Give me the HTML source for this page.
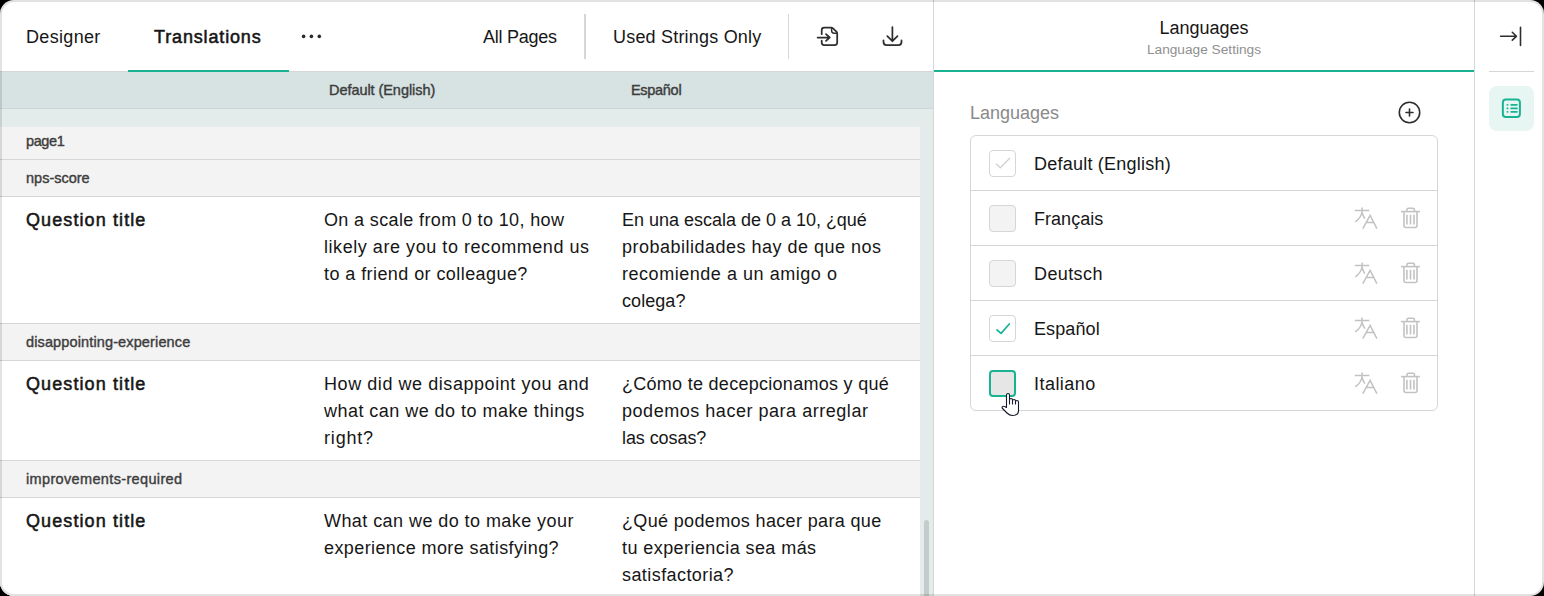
<!DOCTYPE html>
<html><head><meta charset="utf-8">
<style>
*{box-sizing:border-box;margin:0;padding:0}
html,body{width:1544px;height:596px;overflow:hidden;background:#000}
body{font-family:"Liberation Sans",sans-serif;color:#161616;position:relative}
#frame{position:absolute;left:0;top:0;width:1544px;height:596px;border-radius:14px;background:#fff;overflow:hidden}
#bord{position:absolute;left:0;top:0;width:1544px;height:596px;border-radius:14px;border:2px solid rgba(0,0,0,0.115);pointer-events:none}
.a{position:absolute;white-space:nowrap}
.bx{position:absolute}
.t18{font-size:18px;line-height:27px}
.sb{font-weight:700}
.grp{position:absolute;left:0;width:920px;background:#f3f3f3}
.ln{position:absolute;height:1px;background:#d6d6d6}
.gtxt{position:absolute;white-space:nowrap;font-size:14.5px;line-height:18px;font-weight:400;color:#3d3d3d;-webkit-text-stroke:0.4px #3d3d3d}
.qh{position:absolute;white-space:nowrap;font-size:18px;line-height:27px;font-weight:400;letter-spacing:1.1px;-webkit-text-stroke:0.55px #161616}
.qt{font-size:18px;line-height:27px;position:absolute;white-space:nowrap}
.cb{position:absolute;left:989px;width:27px;height:27px;border:1px solid #d6d6d6;border-radius:4px;background:#f3f3f3}
.ll{position:absolute;left:1034px;font-size:18px;line-height:24px;white-space:nowrap;letter-spacing:0.23px}
.ic{position:absolute;overflow:visible}
</style></head>
<body>
<div id="frame">
  <!-- top toolbar -->
  <div class="a t18" style="left:26px;top:24px;letter-spacing:0.33px">Designer</div>
  <div class="a t18" style="left:154px;top:24px;letter-spacing:0.85px;-webkit-text-stroke:0.55px #161616">Translations</div>
  <svg class="ic" style="left:0;top:0" width="1" height="1"><g fill="#2a2a2a"><circle cx="303.6" cy="36.4" r="1.8"/><circle cx="311.4" cy="36.4" r="1.8"/><circle cx="319.3" cy="36.4" r="1.8"/></g></svg>
  <div class="a t18" style="left:483px;top:24px;letter-spacing:-0.25px">All Pages</div>
  <div class="bx" style="left:584px;top:14px;width:2px;height:45px;background:#d6d6d6"></div>
  <div class="a t18" style="left:613px;top:24px;letter-spacing:0.2px">Used Strings Only</div>
  <div class="bx" style="left:788px;top:14px;width:1px;height:45px;background:#d6d6d6"></div>
  <!-- import icon -->
  <svg class="ic" style="left:812px;top:20px" width="34" height="32" viewBox="812 20 34 32" fill="none" stroke="#2e2e2e" stroke-width="1.75" stroke-linecap="round" stroke-linejoin="round">
    <path d="M821.7,34.2 V30 Q821.7,27.5 824.2,27.5 H831.3 Q832.2,27.5 833,28.3 L836.4,31.7 Q837.2,32.5 837.2,33.4 V42.5 Q837.2,45 834.7,45 H824.2 Q821.7,45 821.7,42.5 V40.7"/>
    <path d="M831.6,28.4 V30.6 Q831.6,33.2 834.2,33.2 H836.5" stroke-width="1.5"/>
    <path d="M817.6,37.5 H829.7 M826,34.2 L829.7,37.5 L826,40.9"/>
  </svg>
  <!-- download icon -->
  <svg class="ic" style="left:876px;top:20px" width="34" height="32" viewBox="876 20 34 32" fill="none" stroke="#2e2e2e" stroke-width="1.75" stroke-linecap="round" stroke-linejoin="round">
    <path d="M892.4,27 V41.2 M887.3,36.1 L892.4,41.2 L897.5,36.1"/>
    <path d="M883.5,40.4 V42 Q883.5,45 886.5,45 H898.5 Q901.5,45 901.5,42 V40.4"/>
  </svg>
  <div class="ln" style="left:0;top:71px;width:933px"></div>
  <div class="bx" style="left:128px;top:70px;width:161px;height:2px;background:#19b394"></div>

  <!-- table header -->
  <div class="bx" style="left:0;top:72px;width:933px;height:36px;background:#d7e2e2"></div>
  <div class="ln" style="left:0;top:108px;width:933px;background:#cfd6d6"></div>
  <div class="bx" style="left:0;top:109px;width:933px;height:487px;background:#e3ecea"></div>
  <div class="gtxt" style="left:329px;top:81px;letter-spacing:-0.06px">Default (English)</div>
  <div class="gtxt" style="left:631px;top:81px;letter-spacing:-0.3px">Español</div>

  <!-- rows -->
  <div class="grp" style="top:127px;height:32px"></div>
  <div class="gtxt" style="left:26px;top:132px;letter-spacing:-0.4px">page1</div>
  <div class="ln" style="left:0;top:159px;width:920px"></div>
  <div class="grp" style="top:160px;height:36px"></div>
  <div class="gtxt" style="left:26px;top:169px">nps-score</div>
  <div class="ln" style="left:0;top:196px;width:920px"></div>
  <div class="bx" style="left:0;top:197px;width:920px;height:126px;background:#fff"></div>
  <div class="qh" style="left:26px;top:207px">Question title</div>
  <div class="qt" style="left:324px;top:207px"><div style="letter-spacing:0.363px">On a scale from 0 to 10, how</div><div style="letter-spacing:0.552px">likely are you to recommend us</div><div style="letter-spacing:0.425px">to a friend or colleague?</div></div>
  <div class="qt" style="left:622px;top:207px"><div style="letter-spacing:-0.011px">En una escala de 0 a 10, ¿qué</div><div style="letter-spacing:0.493px">probabilidades hay de que nos</div><div style="letter-spacing:0.536px">recomiende a un amigo o</div><div style="letter-spacing:0.067px">colega?</div></div>
  <div class="ln" style="left:0;top:323px;width:920px"></div>
  <div class="grp" style="top:324px;height:36px"></div>
  <div class="gtxt" style="left:26px;top:333px;letter-spacing:0.13px">disappointing-experience</div>
  <div class="ln" style="left:0;top:360px;width:920px"></div>
  <div class="bx" style="left:0;top:361px;width:920px;height:99px;background:#fff"></div>
  <div class="qh" style="left:26px;top:371px">Question title</div>
  <div class="qt" style="left:324px;top:371px"><div style="letter-spacing:0.561px">How did we disappoint you and</div><div style="letter-spacing:0.464px">what can we do to make things</div><div style="letter-spacing:0.82px">right?</div></div>
  <div class="qt" style="left:622px;top:371px"><div style="letter-spacing:0.281px">¿Cómo te decepcionamos y qué</div><div style="letter-spacing:0.531px">podemos hacer para arreglar</div><div style="letter-spacing:-0.078px">las cosas?</div></div>
  <div class="ln" style="left:0;top:460px;width:920px"></div>
  <div class="grp" style="top:461px;height:36px"></div>
  <div class="gtxt" style="left:26px;top:470px;letter-spacing:0.35px">improvements-required</div>
  <div class="ln" style="left:0;top:497px;width:920px"></div>
  <div class="bx" style="left:0;top:498px;width:920px;height:98px;background:#fff"></div>
  <div class="qh" style="left:26px;top:508px">Question title</div>
  <div class="qt" style="left:324px;top:508px"><div style="letter-spacing:0.435px">What can we do to make your</div><div style="letter-spacing:0.404px">experience more satisfying?</div></div>
  <div class="qt" style="left:622px;top:508px"><div style="letter-spacing:0.346px">¿Qué podemos hacer para que</div><div style="letter-spacing:0.429px">tu experiencia sea más</div><div style="letter-spacing:0.423px">satisfactoria?</div></div>
  <!-- scrollbar -->
  <div class="bx" style="left:924px;top:520px;width:5px;height:90px;border-radius:3px;background:#c4cbca"></div>

  <!-- panel divider -->
  <div class="bx" style="left:933px;top:0;width:1px;height:596px;background:#d6d6d6"></div>

  <!-- right panel -->
  <div class="a" style="left:934px;top:17px;width:540px;text-align:center;font-size:18px;line-height:22px">Languages</div>
  <div class="a" style="left:934px;top:41px;width:540px;text-align:center;font-size:13.7px;line-height:18px;color:#909090">Language Settings</div>
  <div class="bx" style="left:934px;top:70px;width:540px;height:2px;background:#19b394"></div>
  <div class="a" style="left:970px;top:102px;font-size:18px;line-height:22px;color:#8a8a8a">Languages</div>
  <svg class="ic" style="left:1390px;top:95px" width="40" height="35" viewBox="1390 95 40 35" fill="none" stroke="#2e2e2e" stroke-width="1.6" stroke-linecap="round">
    <circle cx="1409.5" cy="112.5" r="10.2"/><path d="M1409.5,109 V116 M1406,112.5 H1413"/>
  </svg>
  <div class="bx" style="left:970px;top:135px;width:468px;height:276px;border:1px solid #d6d6d6;border-radius:6px"></div>
  <div class="ln" style="left:971px;top:190px;width:466px"></div>
  <div class="ln" style="left:971px;top:245px;width:466px"></div>
  <div class="ln" style="left:971px;top:300px;width:466px"></div>
  <div class="ln" style="left:971px;top:355px;width:466px"></div>

  <div class="cb" style="top:150px;background:#fff"></div>
  <svg class="ic" style="left:0;top:0" width="1" height="1" fill="none" stroke="#d0d0d0" stroke-width="1.3" stroke-linecap="round" stroke-linejoin="round"><path d="M996.5,164 L1000.3,167.8 L1009.7,158.2"/></svg>
  <div class="ll" style="top:152px">Default (English)</div>

  <div class="cb" style="top:205px"></div>
  <div class="ll" style="top:207px;letter-spacing:0.04px">Français</div>
  <div class="cb" style="top:260px"></div>
  <div class="ll" style="top:262px;letter-spacing:0.4px">Deutsch</div>
  <div class="cb" style="top:315px;background:#fff"></div>
  <svg class="ic" style="left:0;top:0" width="1" height="1" fill="none" stroke="#19b394" stroke-width="1.7" stroke-linecap="round" stroke-linejoin="round"><path d="M997,330 L1001.1,333.4 L1009.3,324"/></svg>
  <div class="ll" style="top:317px;letter-spacing:0.11px">Español</div>
  <div class="cb" style="top:370px;border:2px solid #19b394;background:#e6e6e6"></div>
  <div class="ll" style="top:372px;letter-spacing:0.46px">Italiano</div>

  <!-- translate + trash icons -->
  <svg class="ic" style="left:0;top:0" width="1" height="1">
    <defs>
      <g id="tr" fill="none" stroke="#c2c2c2" stroke-width="1.5" stroke-linecap="butt" stroke-linejoin="miter">
        <path d="M1354.8,210.5 H1369.4 M1362.1,207.5 V211 Q1361.5,217.5 1355.3,221.9 M1362.1,212.5 Q1363,216 1364.8,218.6"/>
        <path d="M1362.8,228.7 L1370.1,215.4 L1376.9,228.7 M1366.3,222.4 H1373.9"/>
      </g>
      <g id="ts" fill="none" stroke="#c2c2c2" stroke-width="1.6" stroke-linecap="butt" stroke-linejoin="round">
        <path d="M1401,211.6 H1419.9"/>
        <path d="M1407,211.6 V209.6 Q1407,208.3 1408.3,208.3 H1413.1 Q1414.4,208.3 1414.4,209.6 V211.6"/>
        <path d="M1404,211.6 V225.5 Q1404,227.5 1406,227.5 H1415 Q1417,227.5 1417,225.5 V211.6"/>
        <path d="M1406.9,214.8 V224.4 M1410.5,214.8 V224.4 M1414.0,214.8 V224.4"/>
      </g>
    </defs>
    <use href="#tr"/><use href="#ts"/>
    <use href="#tr" y="55"/><use href="#ts" y="55"/>
    <use href="#tr" y="110"/><use href="#ts" y="110"/>
    <use href="#tr" y="165"/><use href="#ts" y="165"/>
  </svg>

  <!-- hand cursor -->
  <svg class="ic" style="left:998px;top:390px" width="26" height="30" viewBox="0 0 26 30" stroke="#161a2a" stroke-width="1.1" stroke-linejoin="round" stroke-linecap="round">
    <path fill="#fff" d="M8.5,17.5 V5 A1.5,1.5 0 0 1 11.5,5 V10 A1.5,1.5 0 0 1 14.5,10 V11 A1.5,1.5 0 0 1 17.5,11 V12 A1.5,1.5 0 0 1 20.5,12 V20.5 Q20.5,25.5 14.5,25.5 Q11.5,25.5 9,23 L4.5,18.5 Q3.6,17.5 4.5,16.6 Q5.5,15.8 6.6,16.6 Z"/>
    <path fill="none" d="M11.5,10 V14 M14.5,11 V14 M17.5,12 V14"/>
  </svg>

  <!-- right sidebar -->
  <div class="bx" style="left:1474px;top:0;width:1px;height:596px;background:#d6d6d6"></div>
  <svg class="ic" style="left:1494px;top:22px" width="34" height="28" viewBox="1494 22 34 28" fill="none" stroke="#2e2e2e" stroke-width="1.6" stroke-linecap="round" stroke-linejoin="round">
    <path d="M1500.6,36.3 H1516.3 M1512.3,32.3 L1516.4,36.3 L1512.3,40.2 M1520.5,27.3 V45.4"/>
  </svg>
  <div class="bx" style="left:1489px;top:71px;width:45px;height:1px;background:#d6d6d6"></div>
  <div class="bx" style="left:1489px;top:86px;width:45px;height:45px;border-radius:8px;background:#e7f6f3"></div>
  <svg class="ic" style="left:1494px;top:90px" width="34" height="36" viewBox="1494 90 34 36" fill="none" stroke="#19b394" stroke-width="2" stroke-linecap="round">
    <rect x="1502.85" y="99.5" width="17.05" height="17.6" rx="3"/>
    <path d="M1507.4,104.8 H1507.6 M1507.4,108.4 H1507.6 M1507.4,111.8 H1507.6 M1511.2,104.8 H1516.9 M1511.2,108.4 H1516.9 M1511.2,111.8 H1516.9" stroke-width="1.8"/>
  </svg>
</div>
<div id="bord"></div>
</body></html>
